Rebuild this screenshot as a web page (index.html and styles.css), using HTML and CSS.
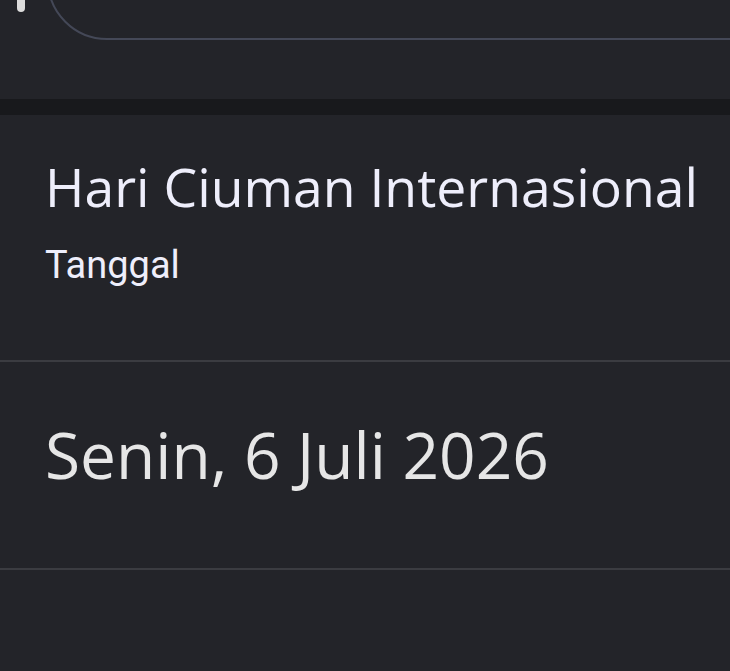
FILE: index.html
```html
<!DOCTYPE html>
<html lang="id">
<head>
  <meta charset="UTF-8" />
  <title>Hari Ciuman Internasional</title>
  <link rel="stylesheet" href="styles.css">
</head>
<body>

  <div class="top">
    <span class="handle"></span>
    <div class="search-box"></div>
  </div>

  <div class="gap"></div>

  <div class="event">
    <h1 class="event-title">Hari Ciuman Internasional</h1>
    <div class="event-label">Tanggal</div>
  </div>

  <div class="event-date">Senin, 6 Juli 2026</div>

</body>
</html>
```

FILE: styles.css
```css
/* Dark event card */
body, html {
  margin: 0; padding: 0;
  height: 100%;
  overflow: hidden;
  background: #232429;
  font-family: 'Open Sans', sans-serif;
}

/* Top strip with the rounded search field */
.top {
  position: relative;
  height: 99px;
  overflow: hidden;
}
.handle {
  position: absolute;
  left: 17px; top: -6px;
  width: 8px; height: 18px;
  border-radius: 4px;
  background: #dcdcdc;
}
.search-box {
  margin: -84px -80px 0 47px;
  height: 120px;
  border: 2px solid #444857;
  border-radius: 60px;
}

.gap {
  height: 16px;
  background: #18191c;
}

/* Title block */
.event {
  padding: 37px 45px 0;
  box-sizing: border-box;
  height: 247px;
  border-bottom: 2px solid #3b3c41;
}
.event-title {
  margin: 0;
  font-size: 53.5px;
  font-weight: 400;
  line-height: 70px;
  white-space: nowrap;
  color: #eeeefb;
}
.event-label {
  margin-top: 15px;
  font-family: Roboto, sans-serif;
  font-size: 38px;
  line-height: 56px;
  color: #eeeefb;
}

.event-date {
  padding: 0 45px;
  height: 208px;
  box-sizing: border-box;
  line-height: 186px;
  font-size: 64px;
  color: #e6e6e6;
  border-bottom: 2px solid #3b3c41;
}
```
